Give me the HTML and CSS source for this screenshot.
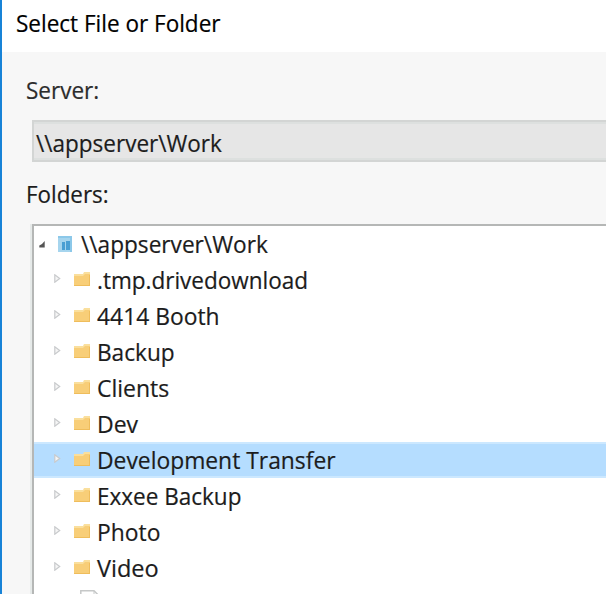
FILE: index.html
```
<!DOCTYPE html>
<html lang="en">
<head>
<meta charset="utf-8">
<title>Select File or Folder</title>
<link rel="stylesheet" href="styles.css">
</head>
<body>
<svg class="defs" width="0" height="0" aria-hidden="true">
  <symbol id="folder" viewBox="0 0 16 14">
    <path fill="#fadf9d" d="M10 0h6v6H9V2zM0 2h9v4H0z"/>
    <path fill="#f8ce78" d="M0 4h9l2-2h5v12H0z"/>
    <path fill="#efbd5c" d="M0 13h16v1H0zM15 3h1v11h-1z"/>
  </symbol>
  <symbol id="closed" viewBox="0 0 7 9">
    <path fill="#f5f5f5" stroke="#c8cacc" stroke-width="1.2" d="M.8.8V8.200L5.700 4.500z"/>
  </symbol>
</svg>
<div class="window">
  <header class="title"><span class="w94">Select File or Folder</span></header>
  <main class="content">
    <div class="label server"><span class="w94">Server:</span></div>
    <div class="field"><span class="w94">\\appserver\Work</span></div>
    <div class="label folders"><span class="w93">Folders:</span></div>
    <div class="tree">
      <div class="row root">
        <svg class="open" width="6" height="7" viewBox="0 0 6 7"><path fill="#555" d="M5.700 0v6.500H.3V4.500L3 3z"/></svg>
        <svg class="share" width="14" height="16" viewBox="0 0 14 16"><path fill="#a6d5ee" d="M0 0h14v16H0z"/><path fill="#8cc8e9" d="M0 0h14v2H0zM12 2h2v14h-2z"/><path fill="#4a9fd3" d="M4 6h3v8H4zM8 5h4v9H8z"/></svg>
        <span class="w945">\\appserver\Work</span>
      </div>
      <div class="row"><svg class="arrow"><use href="#closed"/></svg><svg class="icon"><use href="#folder"/></svg><span class="w94">.tmp.drivedownload</span></div>
      <div class="row"><svg class="arrow"><use href="#closed"/></svg><svg class="icon"><use href="#folder"/></svg><span class="w95">4414 Booth</span></div>
      <div class="row"><svg class="arrow"><use href="#closed"/></svg><svg class="icon"><use href="#folder"/></svg><span class="w945">Backup</span></div>
      <div class="row"><svg class="arrow"><use href="#closed"/></svg><svg class="icon"><use href="#folder"/></svg><span class="w96">Clients</span></div>
      <div class="row"><svg class="arrow"><use href="#closed"/></svg><svg class="icon"><use href="#folder"/></svg><span class="w96">Dev</span></div>
      <div class="row selected"><svg class="arrow"><use href="#closed"/></svg><svg class="icon"><use href="#folder"/></svg><span class="w95">Development Transfer</span></div>
      <div class="row"><svg class="arrow"><use href="#closed"/></svg><svg class="icon"><use href="#folder"/></svg><span class="w94">Exxee Backup</span></div>
      <div class="row"><svg class="arrow"><use href="#closed"/></svg><svg class="icon"><use href="#folder"/></svg><span class="w95">Photo</span></div>
      <div class="row"><svg class="arrow"><use href="#closed"/></svg><svg class="icon"><use href="#folder"/></svg><span class="w98">Video</span></div>
      <div class="row file"><svg width="20" height="24" viewBox="0 0 20 24"><path fill="#fff" stroke="#c6c8c8" stroke-width="1.5" d="M.8.8H14l5 5V23H.8z"/><path fill="none" stroke="#c6c8c8" d="M14 1v4h5"/></svg></div>
    </div>
  </main>
</div>
</body>
</html>
```
FILE: styles.css
```
* { box-sizing: border-box; }
body {
  margin: 0;
  height: 594px;
  overflow: hidden;
  font: 24px/36px "Open Sans", "Noto Sans", sans-serif;
  color: #1c1c1c;
}
.defs { display: block; height: 0; }
.window {
  height: 594px;
  overflow: hidden;
  border-left: 2px solid #1883d7;
  background: #f7f7f7;
}
.title {
  height: 52px;
  padding: 5px 0 0 14px;
  background: #fff;
  color: #000;
}
span {
  display: inline-block;
  white-space: nowrap;
  transform-origin: 0 50%;
  -webkit-text-stroke: .2px;
}
.w93 { transform: scaleX(.932); }
.w94 { transform: scaleX(.938); }
.w945 { transform: scaleX(.943); }
.w95 { transform: scaleX(.952); }
.w96 { transform: scaleX(.958); }
.w98 { transform: scaleX(.98); }
.content { padding-left: 30px; }
.label { margin-left: -6px; }
.server { padding-top: 20px; height: 68px; color: #2c2c2c; }
.field {
  height: 42px;
  padding: 3px 0 0 2px;
  border: 2px solid #d3d5d4;
  border-right: 0;
  background: #e6e6e6;
  box-shadow: inset 0 2px #dde0df, inset 0 -2px #dde0df;
}
.folders { padding-top: 14px; height: 62px; }
.tree {
  height: 380px;
  border-top: 2px solid #b5b7b6;
  border-left: 2px solid #b5b7b6;
  background: #fff;
  box-shadow: -2px 0 #e6eae9;
}
.row {
  display: flex;
  align-items: center;
  height: 36px;
  padding-left: 20px;
}
.row svg { flex: none; }
.root { padding-left: 5px; }
.open { margin-right: 13px; }
.share { margin: 0 9px 0 0; }
.arrow { width: 7px; height: 9px; margin: 0 13px 3px 0; }
.icon { width: 16px; height: 14px; margin: 0 7px 2px 0; }
.selected {
  background: #b5ddff;
  border: solid #cce8ff;
  border-width: 2px 0;
}
.file { align-items: flex-start; padding: 4px 0 0 46px; }
```
